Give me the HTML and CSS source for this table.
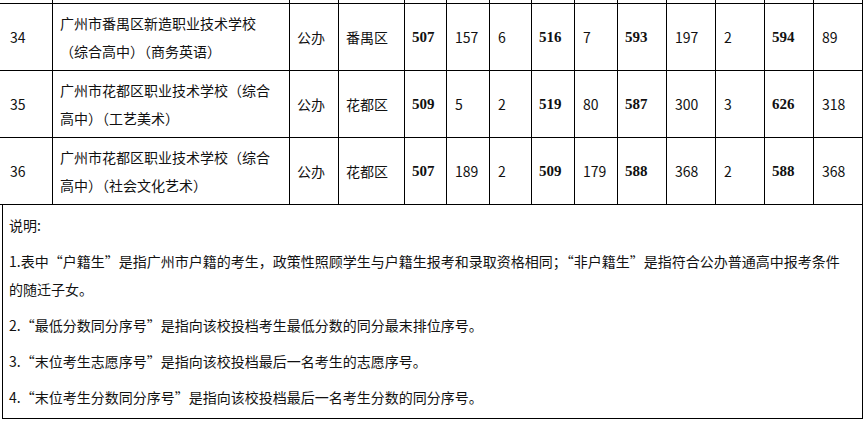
FILE: index.html
```html
<!DOCTYPE html>
<html lang="zh-CN">
<head>
<meta charset="utf-8">
<title>录取分数</title>
<link rel="stylesheet" href="styles.css">
</head>
<body>
<div class="page">
  <table class="scores">
    <colgroup>
      <col class="c-no"><col class="c-name"><col class="c-type"><col class="c-area">
      <col class="c-n42"><col class="c-n43"><col class="c-n42"><col class="c-n43"><col class="c-n43">
      <col class="c-n49"><col class="c-n49"><col class="c-n49"><col class="c-n49"><col class="c-n49">
    </colgroup>
    <tbody>
      <tr class="cut">
        <td></td><td></td><td></td><td></td><td></td><td></td><td></td>
        <td></td><td></td><td></td><td></td><td></td><td></td><td></td>
      </tr>
      <tr>
        <td class="no">34</td>
        <td class="name">广州市番禺区新造职业技术学校（综合高中）（商务英语）</td>
        <td>公办</td>
        <td>番禺区</td>
        <td class="b">507</td>
        <td class="n">157</td>
        <td class="n">6</td>
        <td class="b">516</td>
        <td class="n">7</td>
        <td class="b">593</td>
        <td class="n">197</td>
        <td class="n">2</td>
        <td class="b">594</td>
        <td class="n">89</td>
      </tr>
      <tr>
        <td class="no">35</td>
        <td class="name">广州市花都区职业技术学校（综合高中）（工艺美术）</td>
        <td>公办</td>
        <td>花都区</td>
        <td class="b">509</td>
        <td class="n">5</td>
        <td class="n">2</td>
        <td class="b">519</td>
        <td class="n">80</td>
        <td class="b">587</td>
        <td class="n">300</td>
        <td class="n">3</td>
        <td class="b">626</td>
        <td class="n">318</td>
      </tr>
      <tr>
        <td class="no">36</td>
        <td class="name">广州市花都区职业技术学校（综合高中）（社会文化艺术）</td>
        <td>公办</td>
        <td>花都区</td>
        <td class="b">507</td>
        <td class="n">189</td>
        <td class="n">2</td>
        <td class="b">509</td>
        <td class="n">179</td>
        <td class="b">588</td>
        <td class="n">368</td>
        <td class="n">2</td>
        <td class="b">588</td>
        <td class="n">368</td>
      </tr>
    </tbody>
  </table>
  <div class="notes">
    <p>说明:</p>
    <p>1.表中“户籍生”是指广州市户籍的考生，政策性照顾学生与户籍生报考和录取资格相同；“非户籍生”是指符合公办普通高中报考条件的随迁子女。</p>
    <p>2.“最低分数同分序号”是指向该校投档考生最低分数的同分最末排位序号。</p>
    <p>3.“末位考生志愿序号”是指向该校投档最后一名考生的志愿序号。</p>
    <p>4.“末位考生分数同分序号”是指向该校投档最后一名考生分数的同分序号。</p>
  </div>
</div>
</body>
</html>
```
FILE: styles.css
```css
html, body {
  margin: 0;
  padding: 0;
  background: #fff;
}

body {
  font-family: "Noto Sans CJK SC", "Noto Sans", sans-serif;
  font-size: 14px;
  color: #111;
  overflow: hidden;
}

.page {
  width: 866px;
}

.scores {
  border-collapse: collapse;
  table-layout: fixed;
  width: 864px;
  margin-left: -1px;
}

.c-no { width: 53px; }
.c-name { width: 237px; }
.c-type { width: 49px; }
.c-area { width: 66px; }
.c-n42 { width: 42px; }
.c-n43 { width: 43px; }
.c-n49 { width: 49px; }

.scores td {
  border: 1px solid #000;
  padding: 5px 6px 5px 7px;
  line-height: 28px;
  vertical-align: middle;
  text-align: left;
  white-space: normal;
}

.scores tr.cut td {
  border-top: none;
  padding: 0;
  height: 3px;
  line-height: 0;
}

.scores td.no {
  padding-left: 10px;
}

.scores td.name {
  padding-left: 7px;
  padding-right: 14px;
}

.scores td.b {
  font-family: "Liberation Serif", "Noto Sans CJK SC", serif;
  font-weight: bold;
  font-size: 15px;
}

.scores td.n {
  padding-left: 8px;
}

.notes {
  margin-left: 2px;
  width: 861px;
  box-sizing: border-box;
  border: 1px solid #000;
  border-top: none;
  padding: 6px 15px 7px 6px;
}

.notes p {
  margin: 0 0 8px;
  line-height: 28px;
}

.notes p:last-child {
  margin-bottom: 0;
}
```
